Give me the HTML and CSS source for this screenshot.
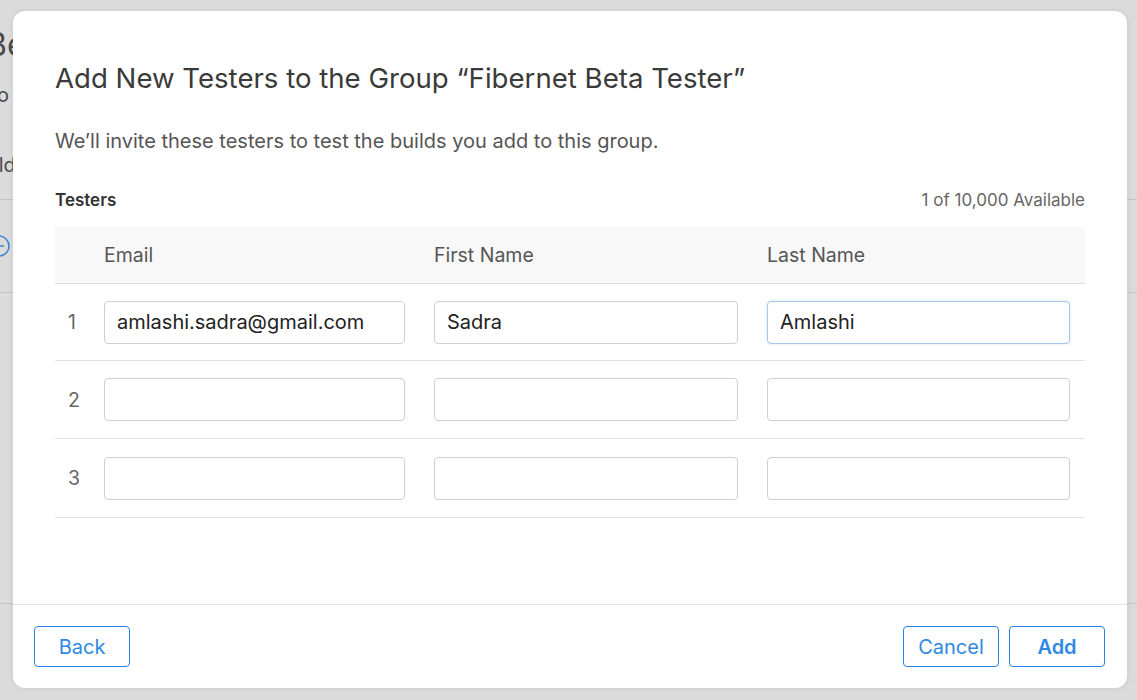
FILE: index.html
```html
<!DOCTYPE html>
<html lang="en">
<head>
<meta charset="utf-8">
<title>Add New Testers</title>
<link rel="stylesheet" href="styles.css">
</head>
<body>
<div class="page">
  <div class="page-title">Beta Testers</div>
  <div class="page-info">Info</div>
  <div class="page-builds">Builds</div>
  <div class="page-rule"></div>
  <div class="page-row">
    <svg class="page-icon" width="24" height="24" viewBox="0 0 24 24"><circle cx="12" cy="12" r="10" fill="none" stroke="#3b86d8" stroke-width="1.5"/><line x1="7" y1="12" x2="17" y2="12" stroke="#3b86d8" stroke-width="1.5"/></svg>
  </div>
  <div class="page-rule"></div>
  <div class="page-spacer"></div>
  <div class="page-rule"></div>
</div>

<div class="modal">
  <div class="modal-body">
    <h1 class="modal-title">Add New Testers to the Group “Fibernet Beta Tester”</h1>
    <p class="modal-desc">We’ll invite these testers to test the builds you add to this group.</p>
    <div class="section-head">
      <span class="section-label">Testers</span>
      <span class="section-count">1 of 10,000 Available</span>
    </div>
    <div class="table">
      <div class="thead">
        <div class="cell num"></div>
        <div class="cell">Email</div>
        <div class="cell">First Name</div>
        <div class="cell">Last Name</div>
      </div>
      <div class="trow first">
        <div class="cell num">1</div>
        <div class="cell"><input class="field" type="text" value="amlashi.sadra@gmail.com"></div>
        <div class="cell"><input class="field" type="text" value="Sadra"></div>
        <div class="cell"><input class="field focused" type="text" value="Amlashi"></div>
      </div>
      <div class="trow">
        <div class="cell num">2</div>
        <div class="cell"><input class="field" type="text"></div>
        <div class="cell"><input class="field" type="text"></div>
        <div class="cell"><input class="field" type="text"></div>
      </div>
      <div class="trow last">
        <div class="cell num">3</div>
        <div class="cell"><input class="field" type="text"></div>
        <div class="cell"><input class="field" type="text"></div>
        <div class="cell"><input class="field" type="text"></div>
      </div>
    </div>
  </div>
  <div class="modal-footer">
    <button class="btn">Back</button>
    <div class="footer-right">
      <button class="btn">Cancel</button>
      <button class="btn btn-strong">Add</button>
    </div>
  </div>
</div>
</body>
</html>
```

FILE: styles.css
```css
* { box-sizing: border-box; }

html, body {
  margin: 0;
  height: 100%;
}

body {
  background: #dbdbdb;
  font-family: Inter, "Noto Sans", "Liberation Sans", sans-serif;
  color: #333;
  overflow: hidden;
}

/* underlying page (dimmed) */
.page {
  color: #4a4a4a;
  padding-top: 25px;
}

.page-title {
  font-size: 32px;
  line-height: 40px;
  margin-left: -14px;
  white-space: nowrap;
}

.page-info {
  font-size: 20px;
  line-height: 24px;
  margin-left: -27px;
  margin-top: 18px;
}

.page-builds {
  font-size: 20px;
  line-height: 24px;
  margin-left: -31px;
  margin-top: 46px;
}

.page-rule {
  height: 1px;
  background: #c4c4c4;
}

.page-builds + .page-rule {
  margin-top: 22px;
}

.page-row {
  height: 92px;
  display: flex;
  align-items: center;
}

.page-icon {
  margin-left: -13px;
}

.page-spacer {
  height: 310px;
}

/* modal dialog */
.modal {
  position: absolute;
  left: 13px;
  top: 11px;
  width: 1114px;
  height: 677px;
  background: #fff;
  border-radius: 12px;
  box-shadow: 0 0 6px rgba(0, 0, 0, 0.08);
  display: flex;
  flex-direction: column;
}

.modal-body {
  flex: 1;
  padding: 50px 42px 0 42px;
}

.modal-title {
  margin: 0;
  font-size: 27.6px;
  line-height: 34px;
  font-weight: 400;
  color: #3a3a3a;
}

.modal-desc {
  margin: 33px 0 0 0;
  font-size: 20px;
  line-height: 26px;
  color: #555;
}

.section-head {
  margin-top: 34px;
  display: flex;
  justify-content: space-between;
  align-items: center;
  height: 24px;
  font-size: 17px;
}

.section-label {
  font-weight: 600;
  color: #333;
}

.section-count {
  color: #666;
}

.table {
  margin-top: 15px;
}

.thead,
.trow {
  display: grid;
  grid-template-columns: 35px 330px 333px 332px;
  align-items: center;
}

.thead {
  height: 57px;
  background: #f8f8f8;
  border-bottom: 1px solid #dedede;
  font-size: 19.5px;
  color: #555;
}

.trow {
  height: 78px;
  border-bottom: 1px solid #e2e2e2;
}

.trow.first {
  height: 77px;
}

.trow.last {
  height: 79px;
}

.cell {
  padding: 0 15px 0 14px;
}

.cell.num {
  padding: 0 0 0 13px;
  font-size: 19.5px;
  color: #666;
}

.field {
  display: block;
  width: 100%;
  height: 43px;
  border: 1px solid #cfcfcf;
  border-radius: 4px;
  padding: 0 12px;
  font-family: inherit;
  font-size: 20px;
  color: #222;
  background: #fff;
  outline: none;
}

.field.focused {
  border-color: #a8c6ea;
  box-shadow: 0 0 3px rgba(80, 150, 230, 0.25);
}

.modal-footer {
  height: 84px;
  border-top: 1px solid #e2e2e2;
  padding: 0 22px 0 21px;
  display: flex;
  justify-content: space-between;
  align-items: center;
}

.footer-right {
  display: flex;
  gap: 10px;
}

.btn {
  width: 96px;
  height: 41px;
  border: 1.5px solid #2a83e2;
  border-radius: 4px;
  background: #fff;
  color: #2f88e4;
  font-family: inherit;
  font-size: 20px;
  padding: 0;
  cursor: pointer;
}

.btn-strong {
  font-weight: 600;
}
```
